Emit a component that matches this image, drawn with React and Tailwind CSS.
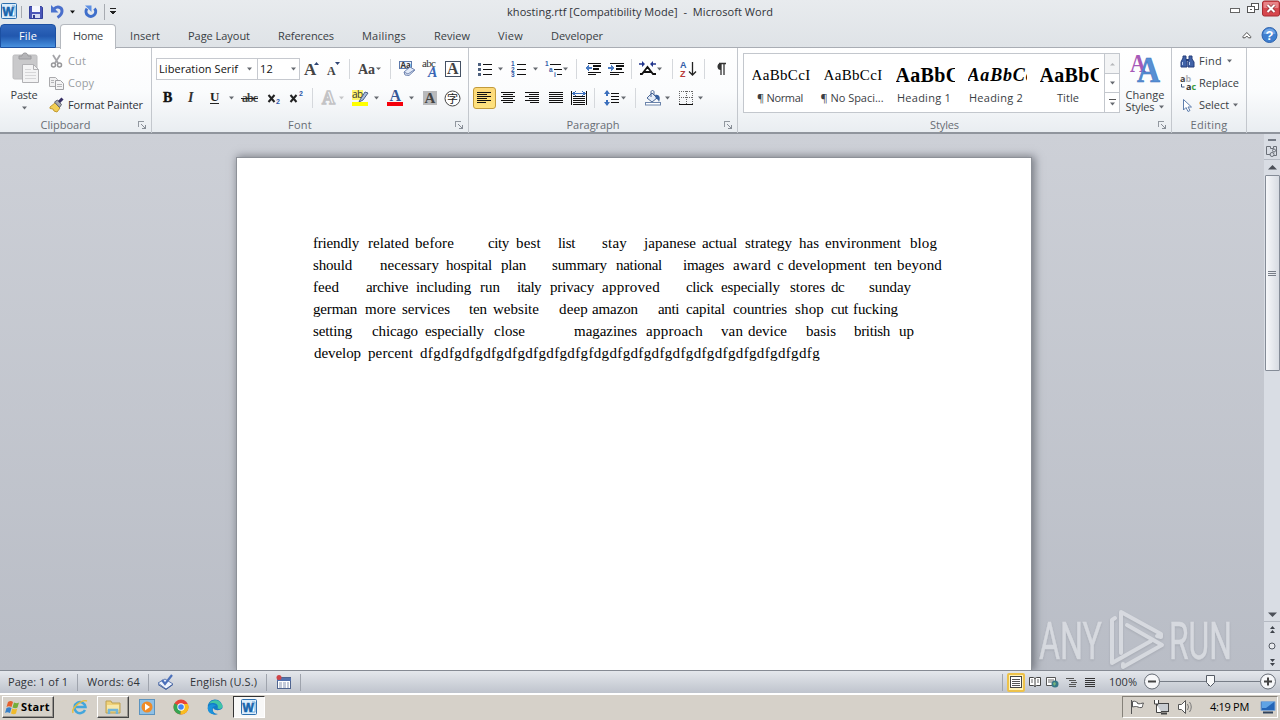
import { useLayoutEffect, useRef, useState } from 'react';

// Text tracked so that it fills exactly `w` pixels.
function Fit({ w, children, className = '', flat = false }) {
  const ref = useRef(null);
  const [ls, setLs] = useState(0);
  useLayoutEffect(() => {
    const nat = ref.current.getBoundingClientRect().width;
    setLs((w - nat) / String(children).length);
  }, []);
  return (
    <span className={'inline-block shrink-0 whitespace-pre ' + (flat ? '' : 'pb-[2px] ') + className} style={{ width: w }}>
      <span ref={ref} style={{ letterSpacing: ls + 'px' }}>{children}</span>
    </span>
  );
}

function Ico({ w = 16, h = 16, className = '', children, crisp = false }) {
  return (
    <svg width={w} height={h} viewBox={`0 0 ${w} ${h}`} className={'shrink-0 overflow-visible ' + className}
      fill="none" shapeRendering={crisp ? 'crispEdges' : 'auto'}>{children}</svg>
  );
}

const Arrow = ({ className = '', c = '#666a70' }) => (
  <Ico w={7} h={4} className={className}><path d="M1 .5h5L3.500 3.500z" fill={c} /></Ico>
);
const Sep = ({ className = '' }) => <div className={'h-5 w-px shrink-0 bg-[#d5d8dc] ' + className} />;
const T = (p) => <text fontFamily="Liberation Serif, serif" {...p} />;
const Lines = ({ rows, c = '#111' }) => rows.map(([x, y, w], i) => <rect key={i} x={x} y={y} width={w} height="1" fill={c} />);

const Launcher = () => (
  <Ico w={8} h={8} crisp className="mr-[5px]">
    <path d="M.5 6V.5H6" stroke="#9298a0" /><path d="M3 3l4 4M7.500 3.500v4h-4" stroke="#878d96" />
  </Ico>
);

function Group({ label, lw, className, children, launcher = true }) {
  return (
    <div className={'flex h-[85px] shrink-0 flex-col border-r border-[#c3c7cd] ' + className}>
      <div className="h-[69px] shrink-0">{children}</div>
      <div className="flex h-4 items-center text-[#686d74]">
        <div className={'flex flex-1 justify-center ' + (launcher ? 'pr-[7px]' : '')}><Fit w={lw}>{label}</Fit></div>
        {launcher && <Launcher />}
      </div>
    </div>
  );
}

const WordLogo = ({ className = '' }) => (
  <Ico w={17} h={17} className={className}>
    <rect x=".5" y=".5" width="15" height="15" rx="1" fill="#dcedfb" stroke="#2c6fae" />
    <path d="M11 3h3v10h-3" fill="#fff" stroke="#73a8d7" />
    <text x="1.500" y="12.500" fontFamily="Liberation Sans, sans-serif" fontWeight="bold" fontSize="12" fill="#1765ad" stroke="#1765ad" strokeWidth=".6">W</text>
  </Ico>
);

function TitleBar() {
  return (
    <div className="flex h-6 shrink-0 items-start">
      <div className="flex h-[23px] w-[507px] items-center">
        <WordLogo className="ml-[1px]" />
        <div className="ml-[3px] h-3 w-px bg-[#a7abb1]" />
        <Ico w={14} h={14} className="ml-[7px]">
          <path d="M.5 1.500h12l1 1v11H.5z" fill="#4a56b8" stroke="#34409a" />
          <rect x="3" y="1" width="8" height="6" fill="#f5f7fd" /><rect x="3" y="9" width="8" height="4" fill="#d4daf3" /><rect x="4" y="10" width="2" height="3" fill="#303b90" />
        </Ico>
        <Ico w={13} h={15} className="ml-[8px]">
          <path d="M3 5C6 1.500 11 3 11 7c0 3-2 5-4.500 6.500" stroke="#4a6fcb" strokeWidth="3" /><path d="M0 1v7.500h7.500z" fill="#4b73cf" />
        </Ico>
        <Arrow className="ml-[5px]" c="#111" />
        <Ico w={14} h={14} className="ml-[8px]">
          <path d="M3 3.700A4.800 4.800 0 1 0 10.500 3.500" stroke="#3f6fcb" strokeWidth="3" /><path d="M1 .5h6.500V7z" fill="#5e90e4" />
        </Ico>
        <div className="ml-[6px] h-4 w-px bg-[#a7abb1]" />
        <Ico w={8} h={7} className="ml-[4px]" crisp><rect x="1" width="6" height="1" fill="#222" /><path d="M0 3h7L3.500 6.500z" fill="#222" /></Ico>
      </div>
      <div className="flex h-6 w-[266px] items-center text-[#303338]"><Fit w={266}>khosting.rtf [Compatibility Mode]  -  Microsoft Word</Fit></div>
      <div className="flex flex-1 justify-end">
        <Ico w={11} h={16} crisp className="mr-[6px]"><rect x=".5" y="8.500" width="9" height="4" fill="#fff" stroke="#666" /></Ico>
        <Ico w={12} h={16} crisp className="mr-[3px]"><rect x="4.500" y="3.500" width="7" height="6" fill="#fff" stroke="#555" /><rect x=".5" y="6.500" width="7" height="6" fill="#fff" stroke="#555" /><rect x="3" y="9" width="2" height="1" fill="#555" /></Ico>
        <Ico w={18} h={17}><rect x=".5" y="1" width="17" height="15" rx="2" fill="#d6474d" stroke="#a52c32" /><rect x="1.500" y="2" width="15" height="6" rx="1" fill="#e88387" /><path d="M5.500 5l7 7M12.500 5l-7 7" stroke="#8d3035" strokeWidth="3.500" /><path d="M5.500 5l7 7M12.500 5l-7 7" stroke="#fff" strokeWidth="2" /></Ico>
      </div>
    </div>
  );
}

function Tabs() {
  return (
    <div className="flex h-6 shrink-0 border-b border-[#a9adb4] text-[#3a3e44]">
      <div className="flex h-6 w-14 items-center justify-center rounded-t-[4px] border border-[#1c50a2] bg-linear-to-b from-[#3268bd] via-[#2157ae] to-[#4790de] text-white"><Fit w={18}>File</Fit></div>
      <div className="z-10 ml-[4px] flex h-[25px] w-[56px] items-center justify-center rounded-t-[4px] border border-b-0 border-[#b5b9bf] bg-white pb-[2px]"><Fit w={30}>Home</Fit></div>
      <div className="flex h-6 items-center">
        <Fit w={30} className="ml-[14px]">Insert</Fit>
        <Fit w={62} className="ml-[28px]">Page Layout</Fit>
        <Fit w={56} className="ml-[28px]">References</Fit>
        <Fit w={44} className="ml-[28px]">Mailings</Fit>
        <Fit w={36} className="ml-[28px]">Review</Fit>
        <Fit w={25} className="ml-[28px]">View</Fit>
        <Fit w={52} className="ml-[28px]">Developer</Fit>
      </div>
      <div className="flex flex-1 items-center justify-end pb-[1px]">
        <Ico w={10} h={8} className="mr-[9px]"><path d="M1 5.500L4.800 1.500 8.700 5.500v1.300H6.500L4.800 5 3.100 6.800H1z" fill="#fff" stroke="#555" /></Ico>
        <Ico w={19} h={16}><circle cx="8.500" cy="8" r="7.500" fill="#3f7fd0" stroke="#2c62ad" /><path d="M2.500 7a6 5.500 0 0 1 12 0z" fill="#70a5e5" /><text x="4.500" y="13" fontFamily="Liberation Sans, sans-serif" fontWeight="bold" fontSize="13" fill="#fff">?</text></Ico>
      </div>
    </div>
  );
}

function Clipboard() {
  return (
    <Group label="Clipboard" lw={50} className="w-[152px]">
      <div className="flex">
        <div className="flex w-[48px] flex-col items-center pt-[4px]">
          <Ico w={28} h={32} className="ml-[3px]">
            <rect x="1" y="3" width="24" height="24" rx="1.500" fill="#c9c9cb" stroke="#bcbcbe" />
            <path d="M7 7V4h3c0-4 6-4 6 0h3v3z" fill="#b4b4b7" stroke="#9b9b9e" />
            <path d="M10.500 12.500h11l5 5v13h-16z" fill="#f3f3f4" stroke="#b1b1b4" /><path d="M21.500 12.500v5h5" stroke="#b1b1b4" />
            <path d="M13 17.500h6M13 20.500h11M13 23.500h11M13 26.500h11" stroke="#d6d6d8" />
          </Ico>
          <Fit w={27} flat className="mt-[3px] leading-4 text-[#3a3e44]">Paste</Fit>
          <Arrow className="mt-[3px]" />
        </div>
        <div className="flex flex-col pt-[2px]">
          <div className="flex h-[22px] items-center text-[#9a9da2]">
            <Ico w={16} h={16} className="ml-[1px] mr-[3px]"><path d="M4 2l5 8M11 2L6 10" stroke="#a5a5a9" strokeWidth="1.800" /><circle cx="4.500" cy="12" r="2" stroke="#969699" strokeWidth="1.500" /><circle cx="10.500" cy="12" r="2" stroke="#969699" strokeWidth="1.500" /></Ico>
            <Fit w={18}>Cut</Fit>
          </div>
          <div className="flex h-[22px] items-center text-[#9a9da2]">
            <Ico w={16} h={14} className="ml-[1px] mr-[3px]"><path d="M.5 1.500h6l2 2v7h-8z" fill="#f0f0f1" stroke="#aaaaad" /><path d="M6.500 4.500h5l3 3v6h-8z" fill="#f4f4f5" stroke="#a0a0a4" /><path d="M2 4.500h3M2 6.500h3M8 8.500h5M8 10.500h5" stroke="#b5b5b8" /></Ico>
            <Fit w={26}>Copy</Fit>
          </div>
          <div className="flex h-[22px] items-center text-[#303338]">
            <Ico w={16} h={15} className="ml-[1px] mr-[3px]"><path d="M1 9l5-4 5 5-3 4-3-1-1-2-3-.500z" fill="#f2cf54" stroke="#c39a31" /><path d="M5.500 4l3-2 4 4.500-2 3z" fill="#a6aab3" stroke="#5f626d" /><path d="M10 4l3.500-3.500" stroke="#372f64" strokeWidth="3" /></Ico>
            <Fit w={75}>Format Painter</Fit>
          </div>
        </div>
      </div>
    </Group>
  );
}

function FontGroup() {
  return (
    <Group label="Font" lw={24} className="w-[317px]">
      <div className="flex h-[22px] translate-y-[10px] items-center">
        <div className="ml-[4px] flex h-[22px] w-[144px] border border-[#c6c9cf] bg-white text-[#111]">
          <div className="flex w-[101px] items-center border-r border-[#c6c9cf] pl-[2px]"><Fit w={79}>Liberation Serif</Fit><Arrow className="ml-[8px]" /></div>
          <div className="flex flex-1 items-center pl-[2px]"><Fit w={13}>12</Fit><Arrow className="ml-[17px]" /></div>
        </div>
        <Ico w={17} h={16} className="ml-[4px]"><T x="0" y="14" fontSize="17" fontWeight="bold" fill="#444">A</T><path d="M10 4l2.500-3L15 4z" fill="#2d4474" /></Ico>
        <Ico w={15} h={16} className="ml-[6px]"><T x="0" y="14" fontSize="12" fontWeight="bold" fill="#444">A</T><path d="M8 1h5l-2.500 3z" fill="#2d4474" /></Ico>
        <Sep className="ml-[7px]" />
        <Ico w={24} h={16} className="ml-[8px]"><T x="0" y="13" fontSize="14" fontWeight="bold" fill="#444">Aa</T><path d="M18 6.500h5L20.500 9z" fill="#666" /></Ico>
        <Sep className="ml-[8px]" />
        <Ico w={17} h={16} className="ml-[8px]"><rect x=".5" y=".5" width="12" height="7" fill="#eef2fa" stroke="#5c79ab" /><text x="1.500" y="7" fontFamily="Open Sans, sans-serif" fontSize="8" fontWeight="bold" fill="#333">Aa</text><path d="M5 11l6-5 5 3-6 5.500-4-.500z" fill="#e3ebf8" stroke="#7387b2" /><path d="M5 11l4 2 6-4" stroke="#7387b2" /></Ico>
        <Ico w={18} h={18} className="ml-[5px]"><T x="1" y="7" fontSize="11" fill="#333" textLength="14">abc</T><T x="7" y="17" fontSize="14" fontStyle="italic" fontWeight="bold" fill="#3865b4">A</T></Ico>
        <Ico w={16} h={16} className="ml-[6px]"><rect x=".5" y=".5" width="15" height="15" fill="#fff" stroke="#445164" /><T x="2" y="13" fontSize="16" fontWeight="bold" fill="#444">A</T></Ico>
      </div>
      <div className="flex h-[22px] translate-y-[17px] items-center">
        <Ico w={12} className="ml-[10px]"><T x="1" y="12" fontSize="14" fontWeight="bold" fill="#111" stroke="#111" strokeWidth=".4">B</T></Ico>
        <Ico w={10} className="ml-[12px]"><T x="2" y="12" fontSize="14" fontStyle="italic" fontWeight="bold" fill="#333">I</T></Ico>
        <Ico w={14} className="ml-[12px]"><T x="2" y="11" fontSize="13" fontWeight="bold" fill="#222">U</T><rect x="2" y="13" width="9" height="1" fill="#222" /></Ico>
        <Arrow className="ml-[6px]" />
        <Ico w={18} className="ml-[6px]"><T x="1" y="12" fontSize="12" fontWeight="bold" fill="#444" textLength="16">abc</T><rect x="0" y="8" width="17" height="1" fill="#222" /></Ico>
        <Ico w={15} className="ml-[8px]"><path d="M1.500 5l6 7M7.500 5l-6 7" stroke="#222" strokeWidth="2" /><text x="9" y="14" fontFamily="Liberation Sans, sans-serif" fontWeight="bold" fontSize="7" fill="#2c56a8">2</text></Ico>
        <Ico w={16} className="ml-[7px]"><path d="M1.500 5l6 7M7.500 5l-6 7" stroke="#222" strokeWidth="2" /><text x="10" y="6" fontFamily="Liberation Sans, sans-serif" fontWeight="bold" fontSize="7" fill="#2c56a8">2</text></Ico>
        <Sep className="ml-[7px]" />
        <Ico w={17} className="ml-[8px]"><T x="1" y="14" fontSize="18" fontWeight="bold" fill="#fafafa" stroke="#c3c3c5" strokeWidth="1.500">A</T></Ico>
        <Arrow c="#c5c6c8" />
        <Ico w={18} h={18} className="ml-[6px]"><rect x="1" y="1" width="11" height="10" fill="#fff66c" /><text x="1" y="9" fontFamily="Open Sans, sans-serif" fontSize="10" fill="#333" textLength="11">ab</text><path d="M9 11l5-8 3 1-5 7-4 2z" fill="#a9bcdc" stroke="#4c6088" /><rect x="1" y="13" width="16" height="4" fill="#ff0" /></Ico>
        <Arrow className="ml-[4px]" />
        <Ico w={18} h={18} className="ml-[6px]"><T x="3.500" y="12" fontSize="16" fontWeight="bold" fill="#355897">A</T><rect x="1" y="13" width="16" height="4" fill="#f5000b" /></Ico>
        <Arrow className="ml-[4px]" />
        <Ico w={14} h={14} className="ml-[8px]"><rect width="14" height="14" fill="#b9babc" /><T x="1.500" y="12" fontSize="15" fontWeight="bold" fill="#444">A</T></Ico>
        <Ico w={17} h={17} className="ml-[7px]"><circle cx="8.500" cy="8.500" r="7.500" fill="#fff" stroke="#444" /><text x="3" y="12.500" fontFamily="Noto Sans CJK JP, sans-serif" fontSize="11" fill="#222">字</text></Ico>
      </div>
    </Group>
  );
}

const N = (p) => <text fontFamily="Liberation Sans, sans-serif" fontWeight="bold" fontSize="6.500" fill="#315ba7" {...p} />;

function Paragraph() {
  return (
    <Group label="Paragraph" lw={53} className="w-[269px]">
      <div className="flex h-[22px] translate-y-[10px] items-center">
        <Ico w={15} className="ml-[9px]" crisp><Lines rows={[[5, 3, 9], [5, 8, 9], [5, 13, 9]]} /><path d="M0 2h3v3H0zM0 7h3v3H0zM0 12h3v3H0z" fill="#4d607e" /></Ico>
        <Arrow className="ml-[4px]" />
        <Ico w={16} className="ml-[7px]"><Lines rows={[[6, 3, 9], [6, 8, 9], [6, 13, 9]]} /><N x="0" y="5">1</N><N x="0" y="10.500">2</N><N x="0" y="16">3</N></Ico>
        <Arrow className="ml-[5px]" />
        <Ico w={17} className="ml-[6px]"><Lines rows={[[5, 3, 11], [9, 8, 8], [12, 13, 5]]} /><N x="0" y="5">1</N><N x="4" y="10.500">a</N><N x="9" y="16">i</N></Ico>
        <Arrow />
        <Sep className="ml-[7px]" />
        <Ico w={17} className="ml-[8px]" crisp><path d="M3 2h13v1H3zM8 4h8v2H8zM8 7h6v2H8zM3 11h13v1H3zM3 13h8v1H3z" fill="#111" /><path d="M0 7l4-3v2h3v2H4v2z" fill="#497bc3" /></Ico>
        <Ico w={17} className="ml-[6px]" crisp><path d="M2 2h14v1H2zM8 4h8v2H8zM8 7h6v2H8zM2 11h14v1H2zM2 13h9v1H2z" fill="#111" /><path d="M7 7L3 4v2H0v2h3v2z" fill="#497bc3" /></Ico>
        <Sep className="ml-[6px]" />
        <Ico w={17} className="ml-[7px]"><path d="M1 13h2l5.500-7 5.500 7h3M5 11h7" stroke="#111" strokeWidth="1.800" /><path d="M3 0v6l3-3zM14 0v6l-3-3z" fill="#20348c" /><path d="M0 3h4M13 3h4" stroke="#20348c" strokeWidth="1.500" /></Ico>
        <Arrow />
        <Sep className="ml-[9px]" />
        <Ico w={16} className="ml-[7px]"><N x="0" y="7" fontSize="9">A</N><N x="0" y="15.500" fontSize="9" fill="#b63a3a">Z</N><path d="M12.500 1v12M9 10.500l3.500 3.500 3.500-3.500" stroke="#222" strokeWidth="1.300" /></Ico>
        <Sep className="ml-[8px]" />
        <Ico w={12} className="ml-[10px]"><path d="M6 2v12M9 2v12M4 2.500h7" stroke="#333" strokeWidth="1.300" /><path d="M6 2a3.500 3.500 0 0 0 0 7z" fill="#333" /></Ico>
      </div>
      <div className="flex h-[22px] translate-y-[17px] items-center">
        <div className="ml-[4px] flex h-[22px] w-[23px] items-center justify-center rounded-[3px] border border-[#c29b3b] bg-linear-to-b from-[#fcd97a] to-[#fee27e]">
          <Ico w={15} crisp><Lines rows={[[0, 2, 14], [0, 4, 10], [0, 6, 14], [0, 8, 10], [0, 10, 14], [0, 12, 9]]} /></Ico>
        </div>
        <Ico w={15} className="ml-[5px]" crisp><Lines rows={[[0, 2, 14], [2, 4, 10], [0, 6, 14], [2, 8, 10], [0, 10, 14], [2, 12, 10]]} /></Ico>
        <Ico w={15} className="ml-[9px]" crisp><Lines rows={[[0, 2, 14], [4, 4, 10], [0, 6, 14], [4, 8, 10], [0, 10, 14], [5, 12, 9]]} /></Ico>
        <Ico w={15} className="ml-[9px]" crisp><Lines rows={[[0, 2, 14], [0, 4, 14], [0, 6, 14], [0, 8, 14], [0, 10, 14], [0, 12, 14]]} /></Ico>
        <Ico w={17} className="ml-[7px]" crisp><Lines rows={[[2, 6, 12], [2, 8, 12], [2, 10, 12], [2, 12, 12], [2, 14, 12]]} /><path d="M.5 1v14M15.500 1v14" stroke="#111" /><path d="M2 3.500h12M5 1L2 3.500 5 6M11 1l3 2.500L11 6" stroke="#3b6fbc" /></Ico>
        <Sep className="ml-[6px]" />
        <Ico w={16} className="ml-[9px]"><Lines rows={[[7, 3, 8], [7, 6, 8], [7, 9, 8], [7, 12, 8]]} /><path d="M3 1v5M3 10v5" stroke="#3b6fbc" strokeWidth="2" /><path d="M0 4l3-4 3 4zM0 12l3 4 3-4z" fill="#3b6fbc" /></Ico>
        <Arrow />
        <Sep className="ml-[8px]" />
        <Ico w={18} className="ml-[8px]"><path d="M3 8l5-5 5 5-5 4z" fill="#e5edf8" stroke="#4a6796" /><path d="M7 7V2c0-2 3-2 3 0v3" stroke="#4a6796" /><path d="M11 5c4-1 6 2 4 7-1-3-2-3-3-3z" fill="#365f9e" /><rect x="1.500" y="12.500" width="15" height="2.500" fill="#fff" stroke="#6b84ab" /></Ico>
        <Arrow className="ml-[2px]" />
        <Ico w={14} className="ml-[8px]" crisp><path d="M.5 1v13M7 1v13M13 1v13M0 1.500h14M0 7.500h14" stroke="#666" strokeDasharray="1 1" /><rect x="0" y="14" width="14" height="1" fill="#111" /></Ico>
        <Arrow className="ml-[4px]" />
      </div>
    </Group>
  );
}

function StyleCell({ sample, w, name, nw, cls }) {
  return (
    <div className="flex w-[72px] flex-col items-center">
      <div className="ml-[2px] mt-[9px] flex h-[24px] w-[59px] items-center overflow-hidden font-['Liberation_Serif',serif] text-black"><Fit w={w} flat className={cls}>{sample}</Fit></div>
      <Fit w={nw} flat className="leading-[21px] text-[#3a3e44]">{name}</Fit>
    </div>
  );
}

function Styles() {
  return (
    <Group label="Styles" lw={29} className="w-[434px]">
      <div className="flex">
        <div className="ml-[5px] mt-[5px] flex h-[60px] w-[377px] border border-[#c3c7cd] bg-white">
          <StyleCell sample="AaBbCcI" w={59} name="¶ Normal" nw={46} cls="text-[15px]" />
          <StyleCell sample="AaBbCcI" w={59} name="¶ No Spaci..." nw={63} cls="text-[15px]" />
          <StyleCell sample="AaBbC" w={65} name="Heading 1" nw={54} cls="text-[20px] font-bold" />
          <StyleCell sample="AaBbCc" w={67} name="Heading 2" nw={54} cls="text-[18px] font-bold italic" />
          <StyleCell sample="AaBbC" w={65} name="Title" nw={22} cls="text-[20px] font-bold" />
          <div className="ml-auto flex w-[15px] flex-col border-l border-[#c3c7cd]">
            <div className="flex h-[19px] items-center justify-center bg-[#f3f4f5]"><Ico w={7} h={4}><path d="M1 3.500h5L3.500 1z" fill="#b5b7ba" /></Ico></div>
            <div className="flex h-[20px] items-center justify-center border-y border-[#c3c7cd]"><Arrow /></div>
            <div className="flex h-[19px] flex-col items-center justify-center"><div className="mb-[2px] h-px w-[7px] bg-[#555]" /><Arrow /></div>
          </div>
        </div>
        <div className="flex w-[50px] flex-col items-center pt-[6px] leading-[12px] text-[#3a3e44]">
          <Ico w={32} h={30}><T x="1" y="18" fontSize="26" fontWeight="bold" fill="#a75ab8" textLength="16" lengthAdjust="spacingAndGlyphs">A</T><T x="8" y="28" fontSize="35" fontWeight="bold" fill="#5790d4" stroke="#3b70bd" strokeWidth=".6" textLength="23" lengthAdjust="spacingAndGlyphs">A</T></Ico>
          <Fit w={39} flat className="mt-[5px]">Change</Fit>
          <div className="flex items-center"><Fit w={29} flat>Styles</Fit><Arrow className="ml-[3px]" /></div>
        </div>
      </div>
    </Group>
  );
}

function Editing() {
  return (
    <Group label="Editing" lw={37} launcher={false} className="w-[75px]">
      <div className="flex flex-col pl-[8px] pt-[2px] text-[#3a3e44]">
        <div className="flex h-[22px] items-center">
          <Ico w={15} h={13}><path d="M3 1h3v3l1 3v5H1V7l2-4zM9 1h3v3l2 3v5H8V7l1-3z" fill="#4062a8" stroke="#263f7c" /><path d="M2.500 7v3M9.500 7v3" stroke="#b9cff1" /><path d="M6 5h3" stroke="#263f7c" strokeWidth="2" /></Ico>
          <Fit w={23} className="ml-[4px]">Find</Fit><Arrow className="ml-[4px]" />
        </div>
        <div className="flex h-[22px] items-center">
          <Ico w={15} h={15}><text x="0" y="6" fontFamily="Open Sans, sans-serif" fontWeight="bold" fontSize="9" fill="#444">a<tspan fill="#b0b2b6">b</tspan></text><text x="6" y="14" fontFamily="Open Sans, sans-serif" fontWeight="bold" fontSize="9" fill="#333">a<tspan fill="#3c9a3c">c</tspan></text><path d="M1.500 8v3h3" stroke="#3e5378" /></Ico>
          <Fit w={40} className="ml-[4px]">Replace</Fit>
        </div>
        <div className="flex h-[22px] items-center">
          <Ico w={15} h={15}><path d="M3.500 1.500v10.500l2.500-2.500 2 4 2-1-2-3.500h3.500z" fill="#fff" stroke="#5f7fae" /></Ico>
          <Fit w={30} className="ml-[4px]">Select</Fit><Arrow className="ml-[3px]" />
        </div>
      </div>
    </Group>
  );
}

// Each entry: word, left edge and right edge measured from the window.
const LINES = [
  [['friendly', 313, 359], ['related', 368, 409], ['before', 415, 454], ['city', 488, 509], ['best', 516, 541], ['list', 558, 575], ['stay', 602, 627], ['japanese', 644, 696], ['actual', 702, 737], ['strategy', 745, 792], ['has', 799, 819], ['environment', 825, 901], ['blog', 910, 937]],
  [['should', 313, 352], ['necessary', 380, 439], ['hospital', 446, 492], ['plan', 501, 526], ['summary', 552, 607], ['national', 616, 662], ['images', 683, 724], ['award', 733, 771], ['c', 777, 783], ['development', 788, 866], ['ten', 874, 892], ['beyond', 897, 942]],
  [['feed', 313, 339], ['archive', 366, 408], ['including', 416, 471], ['run', 480, 500], ['italy', 517, 541], ['privacy', 550, 594], ['approved', 602, 660], ['click', 686, 713], ['especially', 721, 780], ['stores', 790, 825], ['dc', 831, 844], ['sunday', 869, 911]],
  [['german', 313, 357], ['more', 365, 396], ['services', 402, 450], ['ten', 469, 487], ['website', 493, 539], ['deep', 559, 588], ['amazon', 592, 638], ['anti', 658, 679], ['capital', 686, 725], ['countries', 733, 787], ['shop', 795, 824], ['cut', 831, 848], ['fucking', 853, 898]],
  [['setting', 313, 352], ['chicago', 372, 418], ['especially', 425, 484], ['close', 494, 525], ['magazines', 574, 637], ['approach', 646, 703], ['van', 721, 743], ['device', 748, 787], ['basis', 806, 836], ['british', 854, 890], ['up', 899, 914]],
  [['develop', 314, 361], ['percent', 368, 413], ['dfg'.repeat(8) + 'fdg' + 'dfg'.repeat(10), 420, 820]],
];

function Page() {
  return (
    <div className="ml-[236px] h-[513px] w-[796px] border border-b-0 border-[#8d9198] bg-white pt-[74px] text-[15px] text-black shadow-[2px_0_8px_1px_rgba(70,74,82,0.6)] font-['Liberation_Serif',serif]">
      {LINES.map((line, i) => (
        <div key={i} className="flex h-[22px] items-center leading-[22px]">
          {line.map(([word, a, b], j) => (
            <div key={j} className="shrink-0" style={{ marginLeft: a - (j ? line[j - 1][2] : 237) }}><Fit w={b - a} flat>{word}</Fit></div>
          ))}
        </div>
      ))}
    </div>
  );
}

function Scroll() {
  return (
    <div className="flex h-full w-4 flex-col items-center bg-[#d9dde4]">
      <div className="mt-[5px] h-[2px] w-[8px] shrink-0 bg-[#747a84]" />
      <Ico w={12} h={12} className="mt-[4px]"><path d="M.5 1.500h4v2h3v-2h3v9h-3M.5 1.500v8h4" stroke="#6b7078" /><circle cx="8" cy="5.500" r="1.500" stroke="#6b7078" /><circle cx="6" cy="9.500" r="2" stroke="#6b7078" /></Ico>
      <div className="mt-[2px] h-px w-full shrink-0 bg-[#b5bac3]" />
      <Ico w={9} h={6} className="mt-[4px]"><path d="M0 5.500h9L4.500 1z" fill="#4c5058" /></Ico>
      <div className="mt-[5px] flex h-[196px] w-[15px] shrink-0 flex-col items-center justify-center gap-[1px] rounded-[1px] border border-[#858c97] bg-linear-to-r from-[#f7f8fa] to-[#d7dbe2]">
        <div className="h-px w-2 bg-[#777d87]" /><div className="h-px w-2 bg-[#777d87]" /><div className="h-px w-2 bg-[#777d87]" />
      </div>
      <Ico w={9} h={6} className="mt-auto"><path d="M0 .5h9L4.500 5z" fill="#4c5058" /></Ico>
      <div className="mt-[3px] h-px w-full shrink-0 bg-[#b5bac3]" />
      <Ico w={7} h={7} className="mt-[4px]"><path d="M1 3h5L3.500 0zM1 7h5L3.500 4z" fill="#3e434b" /></Ico>
      <Ico w={8} h={8} className="mt-[9px]"><circle cx="4" cy="4" r="3" stroke="#555a63" fill="#e8eaee" /></Ico>
      <Ico w={7} h={7} className="mb-[4px] mt-[9px]"><path d="M1 0h5L3.500 3zM1 4h5L3.500 7z" fill="#3e434b" /></Ico>
    </div>
  );
}

function Watermark() {
  return (
    <svg className="absolute left-[1035px] top-[600px] drop-shadow-[0_1px_1px_rgba(80,85,95,0.35)]" width="200" height="75" viewBox="0 0 200 75" fill="none" opacity=".55">
      <g fontFamily="Roboto, sans-serif" fontWeight="400" fontSize="51" fill="#eef0f3" stroke="#eef0f3" strokeWidth=".5">
        <text x="4" y="59" textLength="63" lengthAdjust="spacingAndGlyphs">ANY</text>
        <text x="134" y="59" textLength="63" lengthAdjust="spacingAndGlyphs">RUN</text>
      </g>
      <g stroke="#eef0f3" strokeWidth="4" strokeLinecap="round" strokeLinejoin="round">
        <path d="M80 18l-3 2v43l39-22" />
        <path d="M86 53V12l40 22v3l-4-1" />
        <path d="M92 25l35 20-39 22v-3" />
      </g>
    </svg>
  );
}

function StatusBar() {
  const sep = 'h-[17px] w-px shrink-0 bg-[#9fa4ad]';
  return (
    <div className="flex h-[23px] shrink-0 items-center border-t border-[#858a93] bg-linear-to-b from-[#e4e7ec] via-[#d1d5dc] to-[#bfc4cd] text-[#303338]">
      <Fit w={60} className="ml-[8px]">Page: 1 of 1</Fit><div className={'ml-[9px] ' + sep} />
      <Fit w={53} className="ml-[9px]">Words: 64</Fit><div className={'ml-[8px] ' + sep} />
      <Ico w={17} h={16} className="ml-[8px]"><path d="M1 9l7-4 8 5-7 5z" fill="#eef3fc" stroke="#5e79b0" /><path d="M1 10.500l8 5 7-5" stroke="#405f9e" /><path d="M5 6l3 4 7-9" stroke="#4c71bb" strokeWidth="2.200" /></Ico>
      <Fit w={67} className="ml-[16px]">English (U.S.)</Fit><div className={'ml-[9px] ' + sep} />
      <Ico w={15} h={14} className="ml-[9px]"><rect x="1.500" y="2.500" width="13" height="11" fill="#fff" stroke="#4f648f" /><path d="M1 3h14v3H1z" fill="#5471ad" /><path d="M3 8h10M3 10h10M3 12h10" stroke="#8795b4" strokeDasharray="3 1" /><circle cx="3" cy="2.500" r="2.500" fill="#cf4448" /></Ico>
      <div className={'ml-[9px] ' + sep} />
      <div className="flex flex-1 items-center justify-end">
        <div className={'mr-[4px] ' + sep} />
        <div className="mr-[4px] flex h-[19px] w-[18px] items-center justify-center rounded-[2px] border-2 border-[#edc24a] bg-[#fff2b8]"><Ico w={12} h={12} crisp><rect x=".5" y=".5" width="11" height="11" fill="#fff" stroke="#444" /><Lines rows={[[2, 3, 8], [2, 5, 8], [2, 7, 8], [2, 9, 8]]} c="#555" /></Ico></div>
        <Ico w={12} h={12} className="mr-[5px]"><path d="M.5 1.500h4l1.500 1 1.500-1h4v8h-4l-1.500 1-1.500-1h-4zM6 2v9" fill="#fff" stroke="#444" /><path d="M2 4h2M2 6h2M8 4h2M8 6h2" stroke="#666" /></Ico>
        <Ico w={13} h={12} className="mr-[7px]"><path d="M.5 1.500h9v8h-9z" fill="#fff" stroke="#555" /><path d="M2 4h6M2 6h6" stroke="#666" /><circle cx="9" cy="8" r="3.500" fill="#377887" /><path d="M7 7l2-1 1 2-2 2" fill="#78b57b" /></Ico>
        <Ico w={11} h={12} className="mr-[8px]" crisp><Lines rows={[[0, 2, 8], [3, 4, 7], [5, 6, 6], [3, 8, 7], [3, 10, 7]]} c="#555" /></Ico>
        <Ico w={11} h={12} className="mr-[13px]" crisp><Lines rows={[[0, 2, 10], [0, 4, 10], [0, 6, 10], [0, 8, 10], [0, 10, 10]]} c="#333" /></Ico>
        <Fit w={28} className="mr-[7px]">100%</Fit>
        <Ico w={132} h={18} className="mr-[4px]">
          <path d="M15 8.500h102" stroke="#777d87" /><path d="M64.500 5v8" stroke="#777d87" />
          <circle cx="8" cy="8.500" r="7.500" fill="#f6f7f9" stroke="#666c75" /><path d="M4 8.500h8" stroke="#444" strokeWidth="2" />
          <path d="M62.500 2.500h8v7l-4 4-4-4z" fill="#f8f9fa" stroke="#555b65" />
          <circle cx="124" cy="8.500" r="7.500" fill="#f6f7f9" stroke="#666c75" /><path d="M120 8.500h8M124 4.500v8" stroke="#444" strokeWidth="2" />
        </Ico>
      </div>
    </div>
  );
}

function TaskBar() {
  return (
    <div className="flex h-[27px] shrink-0 items-center border-t-2 border-white bg-[#d6d1c9] pb-px text-black">
      <div className="ml-[2px] flex h-[22px] w-[52px] items-center border border-b-[#444] border-l-white border-r-[#444] border-t-white pl-[2px] shadow-[inset_-1px_-1px_#999590]">
        <Ico w={15} h={15}><path d="M3 2q3-2 5 0L6.500 7q-3-1.500-5 0z" fill="#e5602d" /><path d="M9 2.500q3 1.500 5 0L12.500 7.500q-2 1.500-5 0z" fill="#74ae3a" /><path d="M1.500 8q3-1.500 5 0L5 13q-3-1.500-5 0z" fill="#3780c9" /><path d="M7.200 8.500q3 1.500 5 0L11 13.500q-2 1.500-5 0z" fill="#f0ba2c" /></Ico>
        <Fit w={29} className="ml-[1px] text-[11px] font-bold">Start</Fit>
      </div>
      <Ico w={16} h={16} className="ml-[18px]"><path d="M13 11a5.500 5.500 0 1 1 .5-3H4" stroke="#43a6dc" strokeWidth="2.500" /><path d="M1 14C-1 9 10 0 15 2" stroke="#e6bd3c" strokeWidth="1.400" /></Ico>
      <div className="ml-[9px] flex h-[22px] w-[32px] items-center justify-center border border-b-[#444] border-l-white border-r-[#444] border-t-white shadow-[inset_-1px_-1px_#999590]">
        <Ico w={16} h={16}><path d="M1 2h5l1 2h8v10H1z" fill="#efd178" stroke="#bda051" /><rect x="2" y="6" width="12" height="5" fill="#f8e8a9" /><path d="M4 15v-4h8v4" stroke="#72b5d8" strokeWidth="2.500" /></Ico>
      </div>
      <Ico w={16} h={16} className="ml-[10px]"><rect x=".5" y=".5" width="15" height="15" fill="#8fc0e5" stroke="#5b93bf" /><circle cx="8" cy="8" r="5.500" fill="#ef8b28" /><path d="M6 4.500l5 3.500-5 3.500z" fill="#fff" /></Ico>
      <Ico w={16} h={16} className="ml-[18px]"><circle cx="8" cy="8" r="7.500" fill="#e84438" /><path d="M8 8L1.500 4.300A7.500 7.500 0 0 0 7.500 15.500z" fill="#35a553" /><path d="M8 8h7.500a7.500 7.500 0 0 1-8 7.500z" fill="#f9bd20" /><path d="M8 5h7a7.500 7.500 0 0 1-.3 6.500L11 9z" fill="#f9bd20" /><circle cx="8" cy="8" r="3.700" fill="#fff" /><circle cx="8" cy="8" r="2.800" fill="#4285f4" /></Ico>
      <Ico w={16} h={16} className="ml-[18px]"><path d="M15.500 9A7.500 7.500 0 1 0 11 15C7 15 5 12 6 9c2 3 7 3 9.500 0z" fill="#137bc6" /><path d="M2 4.500C5 0 13-.500 15.500 7c0 3-3 3.500-5 2.500 2-5-4-6.500-8.500-5z" fill="#40c5a5" /><path d="M1 8c2-4 7-3 8-1-5 0-5 5-1 7.500C3 16 0 12 1 8z" fill="#1a92db" /></Ico>
      <div className="ml-[10px] flex h-[22px] w-[32px] items-center justify-center border border-b-white border-l-[#333] border-r-white border-t-[#333] bg-[#f8f8f7]"><WordLogo /></div>
      <div className="ml-auto mr-[2px] flex h-[22px] w-[156px] items-center border border-b-white border-l-[#858179] border-r-white border-t-[#858179]">
        <Ico w={16} h={16} className="ml-[6px]"><path d="M2.500 1v14" stroke="#555" /><path d="M3.500 2.500c3-1 4 1 5 1v1c2 1 4-.500 6-.500-1 2-1 3-1 4-2 1.500-4 0-6-.500-1 0-2 0-4 .5z" fill="#fff" stroke="#555" /></Ico>
        <Ico w={16} h={16} className="ml-[8px]"><rect x="4.500" y="4.500" width="11" height="8" fill="#c8ccd1" stroke="#444" /><path d="M8 14.500h6" stroke="#444" strokeWidth="2" /><path d="M1.500 1v4h4V1M3.500 5v8.500h5" stroke="#444" fill="#fff" /></Ico>
        <Ico w={17} h={16} className="ml-[8px]"><path d="M1.500 5.500h3l4-4v13l-4-4h-3z" fill="#fff" stroke="#555" /><path d="M10.500 5q2 3 0 6M12.500 3q3.500 5 0 10" stroke="#777" /></Ico>
        <Fit w={39} className="ml-[16px] text-[11px]">4:19 PM</Fit>
        <Ico w={16} h={14} className="ml-[11px]"><path d="M1 1.500h14v9H1z" fill="#2465b7" stroke="#83a8d3" /><path d="M2 2h12L6 8H2z" fill="#5fa3e5" /><path d="M3 12.500h10" stroke="#30435c" strokeWidth="2" /></Ico>
      </div>
    </div>
  );
}

export default function App() {
  return (
    <div className="relative flex h-[720px] w-[1280px] flex-col overflow-hidden bg-linear-to-b from-[#e8ebee] to-[#dfe3e7] to-[48px] font-['Open_Sans',sans-serif] text-[11px] leading-none">
      <TitleBar />
      <Tabs />
      <div className="flex h-[86px] shrink-0 border-b-2 border-[#90959d] bg-linear-to-b from-white via-[#fbfcfd] to-[#e9edf1]">
        <Clipboard /><FontGroup /><Paragraph /><Styles /><Editing />
      </div>
      <div className="flex h-[536px] shrink-0 justify-between overflow-hidden bg-linear-to-b from-[#cdd0d7] to-[#b9bdc6]">
        <div className="pt-[23px]"><Page /></div>
        <Scroll />
      </div>
      <StatusBar />
      <TaskBar />
      <Watermark />
    </div>
  );
}
